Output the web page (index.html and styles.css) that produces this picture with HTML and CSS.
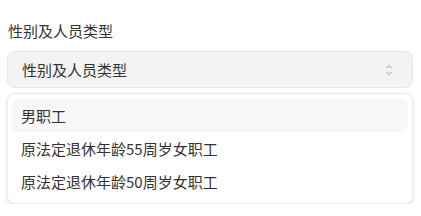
FILE: index.html
```html
<!DOCTYPE html>
<html lang="zh-CN">
<head>
    <meta charset="UTF-8">
    <title>性别及人员类型</title>
    <link rel="stylesheet" href="styles.css">
</head>
<body>
    <div class="field">
        <label class="field-label">性别及人员类型</label>
        <div class="select">
            <span class="select-value">性别及人员类型</span>
            <svg class="select-icon" width="10" height="14" viewBox="0 0 10 14">
                <path d="M2.5 5 L5 2.5 L7.5 5" fill="none" stroke="#999" stroke-width="1"/>
                <path d="M2.5 9 L5 11.5 L7.5 9" fill="none" stroke="#999" stroke-width="1"/>
            </svg>
        </div>
        <ul class="menu">
            <li class="menu-item active">男职工</li>
            <li class="menu-item">原法定退休年龄55周岁女职工</li>
            <li class="menu-item">原法定退休年龄50周岁女职工</li>
        </ul>
    </div>
</body>
</html>
```

FILE: styles.css
```css
body {
    margin: 0;
    background: #fff;
    font-family: "Noto Sans CJK SC", "Noto Sans", sans-serif;
    color: #333;
    font-size: 15px;
}

.field {
    padding: 21px 8px 0 7px;
}

.field-label {
    display: block;
    line-height: 20px;
    margin-bottom: 10px;
    padding-left: 1px;
}

.select {
    height: 37px;
    box-sizing: border-box;
    background: #f3f3f3;
    border: 1px solid #e6e6e6;
    border-radius: 8px;
    display: flex;
    align-items: center;
    justify-content: space-between;
    padding: 0 18px 0 14px;
}

.select-icon {
    display: block;
}

.menu {
    list-style: none;
    margin: 5px 0 0;
    padding: 5px 4px;
    background: #fff;
    border: 1px solid #ececec;
    border-radius: 8px;
    box-shadow: 0 2px 4px rgba(0, 0, 0, 0.12);
}

.menu-item {
    height: 33px;
    line-height: 33px;
    padding: 0 9px;
    border-radius: 6px;
}

.menu-item.active {
    background: #f7f7f7;
}
```
